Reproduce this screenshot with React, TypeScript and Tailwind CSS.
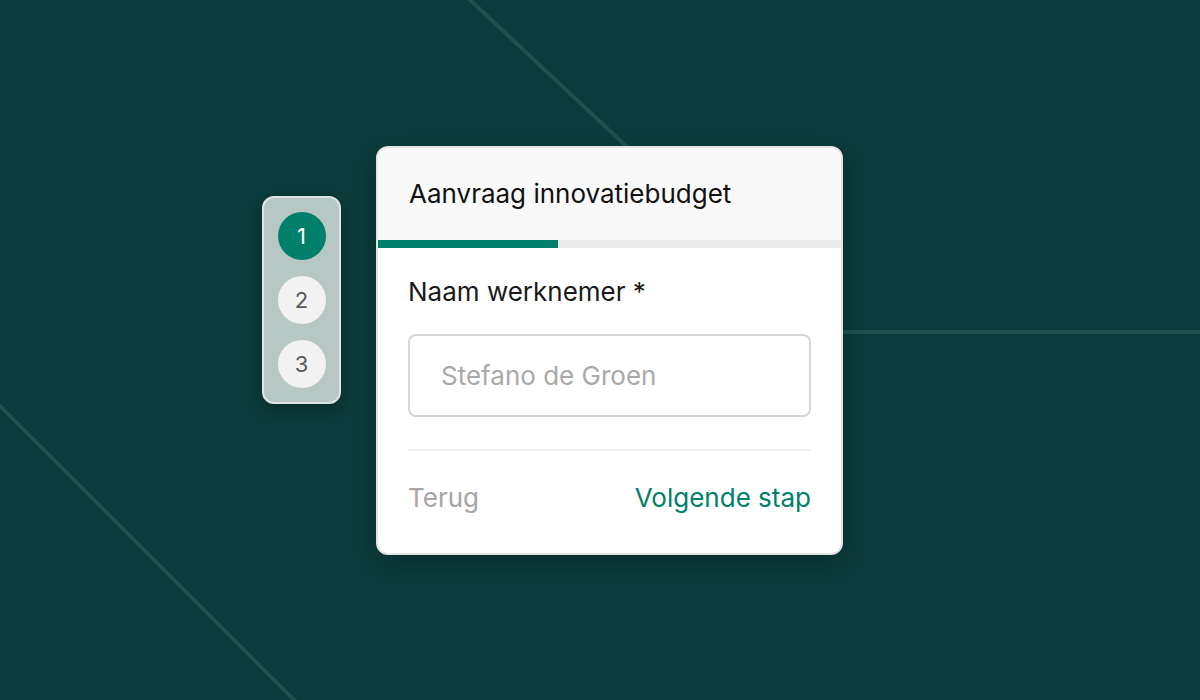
import React from "react";

function Step({ n, active }: { n: number; active?: boolean }) {
  return (
    <div
      className={
        active
          ? "flex h-12 w-12 items-center justify-center rounded-full bg-[#00806a] text-[22px] text-white"
          : "flex h-12 w-12 items-center justify-center rounded-full bg-[#f2f2f2] text-[22px] text-[#5a5a5a]"
      }
    >
      {n}
    </div>
  );
}

export default function App() {
  return (
    <div
      className="relative h-[700px] w-[1200px] overflow-hidden bg-[#0b3b3a]"
      style={{ fontFamily: "Inter, 'Noto Sans', sans-serif" }}
    >
      {/* decorative background lines */}
      <svg className="absolute inset-0" width="1200" height="700">
        <g stroke="#1d514d" strokeWidth="4" fill="none">
          <line x1="468" y1="-2" x2="780" y2="290" />
          <line x1="840" y1="332" x2="1202" y2="332" />
          <line x1="-2" y1="404" x2="296" y2="702" />
        </g>
      </svg>

      <div className="relative flex items-start gap-[35px] pl-[262px] pt-[146px]">
        <div className="mt-[50px] flex w-[79px] flex-col items-center gap-4 rounded-xl border-2 border-[#dde6e4] bg-[#b6c7c4] py-[14px] shadow-[0_6px_16px_rgba(0,0,0,0.25)]">
          <Step n={1} active />
          <Step n={2} />
          <Step n={3} />
        </div>

        <div className="w-[467px] overflow-hidden rounded-xl border-2 border-[#e3e3e3] bg-white shadow-[0_8px_24px_rgba(0,0,0,0.2)]">
          <div className="flex h-[92px] items-center bg-[#f9f9f9] px-[31px]">
            <h1 className="text-[26px] font-normal leading-8 text-[#111]">Aanvraag innovatiebudget</h1>
          </div>
          <div className="h-2 bg-[#ececec]">
            <div className="h-full w-[180px] bg-[#00806a]" />
          </div>
          <div className="px-[30px] pt-[28px]">
            <div className="text-[26px] leading-8 text-[#1a1a1a]">Naam werknemer *</div>
            <div className="mt-[26px] flex h-[83px] items-center rounded-lg border-2 border-[#d6d6d6] px-[31px] text-[26px] leading-8 text-[#a9a9a9]">
              Stefano de Groen
            </div>
            <div className="mt-8 h-[2px] bg-[#efefef]" />
            <div className="flex items-center justify-between pb-[39px] pt-[31px] text-[26px] leading-8">
              <span className="text-[#a6a6a6]">Terug</span>
              <span className="text-[#00806a]">Volgende stap</span>
            </div>
          </div>
        </div>
      </div>
    </div>
  );
}
